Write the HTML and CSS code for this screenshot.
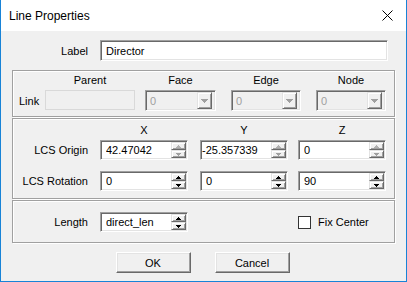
FILE: index.html
```html
<!DOCTYPE html>
<html lang="en">
<head>
    <meta charset="UTF-8">
    <title>Line Properties</title>
    <link rel="stylesheet" href="styles.css">
</head>
<body>
    <div class="dialog">
        <div class="titlebar">
            <span class="title">Line Properties</span>
            <svg class="close" width="11" height="11" viewBox="0 0 11 11">
                <path d="M0.5 0.5 L10.5 10.5 M10.5 0.5 L0.5 10.5" stroke="#000" stroke-width="1"/>
            </svg>
        </div>

        <div class="content">
            <div class="label-row">
                <label class="lbl">Label</label>
                <input type="text" class="edit edit-label" value="Director">
            </div>

            <!-- Link -->
            <div class="group group-link">
                <div class="link-head">
                    <span class="hdr w90 mr10">Parent</span>
                    <span class="hdr w71 mr15">Face</span>
                    <span class="hdr w70 mr15">Edge</span>
                    <span class="hdr w70">Node</span>
                </div>
                <div class="link-row">
                    <span class="link-lbl">Link</span>
                    <div class="parent-field mr10"></div>
                    <div class="combo w71 mr15">
                        <span class="combo-text">0</span>
                        <span class="raised combo-btn">
                            <svg width="7" height="4" viewBox="0 0 7 4"><path d="M0 0h7v1H6v1H5v1H4v1H3V3H2V2H1V1H0z" fill="#a0a0a0"/></svg>
                        </span>
                    </div>
                    <div class="combo w70 mr15">
                        <span class="combo-text">0</span>
                        <span class="raised combo-btn">
                            <svg width="7" height="4" viewBox="0 0 7 4"><path d="M0 0h7v1H6v1H5v1H4v1H3V3H2V2H1V1H0z" fill="#a0a0a0"/></svg>
                        </span>
                    </div>
                    <div class="combo w70">
                        <span class="combo-text">0</span>
                        <span class="raised combo-btn">
                            <svg width="7" height="4" viewBox="0 0 7 4"><path d="M0 0h7v1H6v1H5v1H4v1H3V3H2V2H1V1H0z" fill="#a0a0a0"/></svg>
                        </span>
                    </div>
                </div>
            </div>

            <!-- LCS -->
            <div class="group group-lcs">
                <div class="coord-head">
                    <span class="cell-lbl"></span>
                    <span class="hdr w88 mr12">X</span>
                    <span class="hdr w88 mr10">Y</span>
                    <span class="hdr w88">Z</span>
                </div>
                <div class="coord-row">
                    <span class="cell-lbl">LCS Origin</span>
                    <div class="edit spin mr12">
                        <input type="text" value="42.47042">
                        <span class="spin-btns">
                            <span class="raised sb"><svg width="5" height="3" viewBox="0 0 5 3"><path d="M2 0h1v1h1v1h1v1H0V2h1V1h1z" fill="#b0b0b0"/></svg></span>
                            <span class="raised sb"><svg width="5" height="3" viewBox="0 0 5 3"><path d="M0 0h5v1H4v1H3v1H2V2H1V1H0z" fill="#a0a0a0"/></svg></span>
                        </span>
                    </div>
                    <div class="edit spin mr10">
                        <input type="text" class="scrolled" value="-25.357339">
                        <span class="spin-btns">
                            <span class="raised sb"><svg width="5" height="3" viewBox="0 0 5 3"><path d="M2 0h1v1h1v1h1v1H0V2h1V1h1z" fill="#b0b0b0"/></svg></span>
                            <span class="raised sb"><svg width="5" height="3" viewBox="0 0 5 3"><path d="M0 0h5v1H4v1H3v1H2V2H1V1H0z" fill="#a0a0a0"/></svg></span>
                        </span>
                    </div>
                    <div class="edit spin">
                        <input type="text" value="0">
                        <span class="spin-btns">
                            <span class="raised sb"><svg width="5" height="3" viewBox="0 0 5 3"><path d="M2 0h1v1h1v1h1v1H0V2h1V1h1z" fill="#b0b0b0"/></svg></span>
                            <span class="raised sb"><svg width="5" height="3" viewBox="0 0 5 3"><path d="M0 0h5v1H4v1H3v1H2V2H1V1H0z" fill="#a0a0a0"/></svg></span>
                        </span>
                    </div>
                </div>
                <div class="coord-row row-rot">
                    <span class="cell-lbl">LCS Rotation</span>
                    <div class="edit spin mr12">
                        <input type="text" value="0">
                        <span class="spin-btns">
                            <span class="raised sb"><svg width="5" height="3" viewBox="0 0 5 3"><path d="M2 0h1v1h1v1h1v1H0V2h1V1h1z" fill="#000"/></svg></span>
                            <span class="raised sb"><svg width="5" height="3" viewBox="0 0 5 3"><path d="M0 0h5v1H4v1H3v1H2V2H1V1H0z" fill="#000"/></svg></span>
                        </span>
                    </div>
                    <div class="edit spin mr10">
                        <input type="text" value="0">
                        <span class="spin-btns">
                            <span class="raised sb"><svg width="5" height="3" viewBox="0 0 5 3"><path d="M2 0h1v1h1v1h1v1H0V2h1V1h1z" fill="#000"/></svg></span>
                            <span class="raised sb"><svg width="5" height="3" viewBox="0 0 5 3"><path d="M0 0h5v1H4v1H3v1H2V2H1V1H0z" fill="#000"/></svg></span>
                        </span>
                    </div>
                    <div class="edit spin">
                        <input type="text" value="90">
                        <span class="spin-btns">
                            <span class="raised sb"><svg width="5" height="3" viewBox="0 0 5 3"><path d="M2 0h1v1h1v1h1v1H0V2h1V1h1z" fill="#000"/></svg></span>
                            <span class="raised sb"><svg width="5" height="3" viewBox="0 0 5 3"><path d="M0 0h5v1H4v1H3v1H2V2H1V1H0z" fill="#000"/></svg></span>
                        </span>
                    </div>
                </div>
            </div>

            <!-- Length -->
            <div class="group group-length">
                <div class="coord-row row-length">
                    <span class="cell-lbl">Length</span>
                    <div class="edit spin">
                        <input type="text" value="direct_len">
                        <span class="spin-btns">
                            <span class="raised sb"><svg width="5" height="3" viewBox="0 0 5 3"><path d="M2 0h1v1h1v1h1v1H0V2h1V1h1z" fill="#000"/></svg></span>
                            <span class="raised sb"><svg width="5" height="3" viewBox="0 0 5 3"><path d="M0 0h5v1H4v1H3v1H2V2H1V1H0z" fill="#000"/></svg></span>
                        </span>
                    </div>
                    <label class="check">
                        <span class="check-box"></span>
                        <span>Fix Center</span>
                    </label>
                </div>
            </div>

            <div class="buttons">
                <button class="btn">OK</button>
                <button class="btn">Cancel</button>
            </div>
        </div>
    </div>
</body>
</html>
```

FILE: styles.css
```css
* {
    margin: 0;
    padding: 0;
    box-sizing: border-box;
}
body {
    font-family: "Liberation Sans", Arial, sans-serif;
    font-size: 11px;
    color: #000;
    background: #f0f0f0;
}
.dialog {
    width: 407px;
    height: 282px;
    border: 1px solid #1883d7;
    border-top: none;
    background: #f0f0f0;
}
.titlebar {
    height: 31px;
    background: #fff;
    display: flex;
    align-items: center;
    justify-content: space-between;
    padding: 0 13px 0 8px;
}
.title {
    font-size: 12px;
}
.close {
    display: block;
}
.content {
    padding: 0 11px;
}

/* widths / spacing helpers */
.w70 { width: 70px; }
.w71 { width: 71px; }
.w88 { width: 88px; }
.w90 { width: 90px; }
.mr10 { margin-right: 10px; }
.mr12 { margin-right: 12px; }
.mr15 { margin-right: 15px; }

/* sunken edit */
.edit {
    height: 20px;
    border: 1px solid;
    border-color: #a0a0a0 #fff #fff #a0a0a0;
    box-shadow: inset 1px 1px 0 #696969, inset -1px -1px 0 #e3e3e3;
    background: #fff;
}
input.edit,
.spin input {
    font: inherit;
    color: #000;
    outline: none;
}
.edit-label {
    width: 288px;
    height: 21px;
    padding: 0 5px;
}

/* raised button face */
.raised {
    border: 1px solid;
    border-color: #e3e3e3 #696969 #696969 #e3e3e3;
    box-shadow: inset 1px 1px 0 #fff, inset -1px -1px 0 #a0a0a0;
    background: #f0f0f0;
}

.label-row {
    display: flex;
    align-items: center;
    margin-top: 9px;
}
.lbl {
    width: 76px;
    margin-right: 12px;
    text-align: right;
}

/* etched group boxes */
.group {
    border: 1px solid #a0a0a0;
    box-shadow: inset 1px 1px 0 #fff, 1px 1px 0 #fff;
}
.group-link {
    margin-top: 9px;
    height: 47px;
}
.group-lcs {
    margin-top: 1px;
    height: 81px;
}
.group-length {
    margin-top: 1px;
    height: 43px;
}
.hdr {
    display: block;
    text-align: center;
    line-height: 13px;
}

/* Link row */
.link-head {
    display: flex;
    padding: 3px 0 0 32px;
}
.link-row {
    display: flex;
    align-items: flex-start;
    margin-top: 3px;
    padding-left: 6px;
}
.link-lbl {
    width: 26px;
    align-self: center;
}
.parent-field {
    width: 90px;
    height: 20px;
    border: 1px solid #d9d9d9;
    background: #f0f0f0;
}
.combo {
    height: 21px;
    display: flex;
    align-items: center;
    justify-content: space-between;
    padding: 2px 3px 2px 4px;
    border: 1px solid;
    border-color: #a0a0a0 #fff #fff #a0a0a0;
    box-shadow: inset 1px 1px 0 #696969, inset -1px -1px 0 #e3e3e3;
    background: #f0f0f0;
}
.combo-text {
    color: #a0a0a0;
}
.combo-btn {
    width: 15px;
    height: 17px;
    display: flex;
    align-items: center;
    justify-content: center;
}

/* coordinates */
.coord-head {
    display: flex;
    padding-top: 5px;
}
.coord-row {
    display: flex;
    align-items: center;
    margin-top: 3px;
}
.row-rot {
    margin-top: 11px;
}
.row-length {
    margin-top: 0;
    padding-top: 11px;
}
.cell-lbl {
    width: 87px;
    padding-right: 12px;
    text-align: right;
}
.spin {
    width: 88px;
    display: flex;
    padding: 1px;
}
.spin input {
    flex: 1;
    min-width: 0;
    border: none;
    background: transparent;
    padding-left: 4px;
}
.spin input.scrolled {
    padding-left: 0;
}
.spin-btns {
    width: 15px;
    display: flex;
    flex-direction: column;
}
.sb {
    flex: 1;
    display: flex;
    align-items: center;
    justify-content: center;
}
.sb svg,
.combo-btn svg {
    display: block;
}

/* checkbox */
.check {
    display: flex;
    align-items: center;
    margin-left: 110px;
}
.check-box {
    width: 13px;
    height: 13px;
    border: 1px solid #333;
    background: #fff;
    margin-right: 7px;
}

/* bottom buttons */
.buttons {
    display: flex;
    justify-content: center;
    gap: 24px;
    margin-top: 9px;
    padding-right: 2px;
}
.btn {
    width: 75px;
    height: 21px;
    font: inherit;
    color: #000;
    border: 1px solid;
    border-color: #fff #696969 #696969 #fff;
    box-shadow: inset -1px -1px 0 #a0a0a0, inset 1px 1px 0 #e3e3e3;
    background: #f0f0f0;
}
```
